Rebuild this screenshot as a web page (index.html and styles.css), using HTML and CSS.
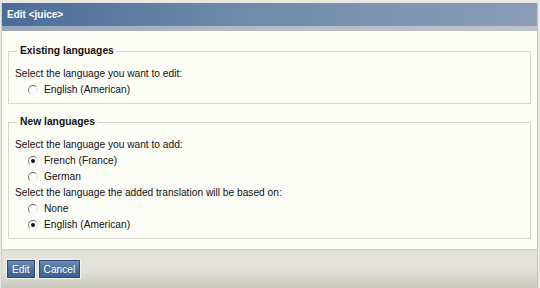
FILE: index.html
```html
<!DOCTYPE html>
<html lang="en">

<head>
    <meta charset="UTF-8">
    <title>Edit &lt;juice&gt;</title>
    <link rel="stylesheet" href="styles.css">
</head>

<body>
    <div class="dialog">
        <div class="dialog-title">Edit &lt;juice&gt;</div>
        <div class="dialog-strip"></div>

        <form class="dialog-body">
            <fieldset class="group">
                <legend>Existing languages</legend>
                <div class="line">Select the language you want to edit:</div>
                <label class="option"><input type="radio" name="edit"> English (American)</label>
            </fieldset>

            <fieldset class="group">
                <legend>New languages</legend>
                <div class="line">Select the language you want to add:</div>
                <label class="option"><input type="radio" name="add" checked> French (France)</label>
                <label class="option"><input type="radio" name="add"> German</label>
                <div class="line">Select the language the added translation will be based on:</div>
                <label class="option"><input type="radio" name="base"> None</label>
                <label class="option"><input type="radio" name="base" checked> English (American)</label>
            </fieldset>
        </form>

        <div class="dialog-footer">
            <button class="btn">Edit</button>
            <button class="btn">Cancel</button>
        </div>
    </div>
</body>

</html>
```

FILE: styles.css
```css
body {
    margin: 0;
    padding: 3px 2px 0 1px;
    background: #e9e8e1;
    font-family: "Liberation Sans", Arial, sans-serif;
    font-size: 10.2px;
    color: #111;
}

.dialog {
    border-left: 1px solid #cfcec6;
    border-right: 1px solid #c4c3bb;
}

.dialog-title {
    height: 23px;
    line-height: 23px;
    padding-left: 5px;
    background: linear-gradient(to right, #4a6d99 0%, #6f8aab 45%, #8b9db6 100%);
    color: #fff;
    font-weight: bold;
    font-size: 10px;
}

.dialog-strip {
    height: 5px;
    background: linear-gradient(to right, #9aa7b8 0%, #b4bcc6 50%, #bcc2c9 100%);
}

.dialog-body {
    background: #fdfdf8;
    padding: 13px 6px 10px 6px;
    border-bottom: 1px solid #d2d1c9;
}

.group {
    margin: 0;
    padding: 8px 8px 5px 6px;
    border: 1px solid #d6d6cf;
    min-width: 0;
}

.group + .group {
    margin-top: 11px;
}

.group legend {
    padding: 0 3px;
    margin-left: 2px;
    font-weight: bold;
    font-size: 10.3px;
    line-height: 14px;
}

.line {
    line-height: 16px;
}

.option {
    display: flex;
    align-items: center;
    gap: 6px;
    padding-left: 13px;
    line-height: 16px;
}

.option input {
    appearance: none;
    -webkit-appearance: none;
    margin: 0;
    width: 10px;
    height: 10px;
    border-radius: 50%;
    border: 1px solid;
    border-color: #6f6f6a #e4e4de #f4f4ef #7d7d78;
    background: #fbfbf7;
    display: grid;
    place-items: center;
}

.option input:checked::after {
    content: "";
    width: 4px;
    height: 4px;
    border-radius: 50%;
    background: #111;
}

.dialog-footer {
    height: 38px;
    padding: 9px 0 0 5px;
    box-sizing: border-box;
    background: linear-gradient(to bottom, #e4e3db 0%, #e4e3db 50%, #c9c9bd 100%);
    border-top: 1px solid #dcdbd3;
    display: flex;
    align-items: flex-start;
    gap: 4px;
}

.btn {
    height: 18px;
    padding: 0 4px;
    font-family: "Liberation Sans", Arial, sans-serif;
    font-size: 10.2px;
    color: #fff;
    background: linear-gradient(to bottom, #6c8db4 0%, #4c709c 50%, #3d628f 100%);
    border: 1px solid #2c4a70;
    outline: 1px solid #f4f4ee;
    border-radius: 0;
}
```
